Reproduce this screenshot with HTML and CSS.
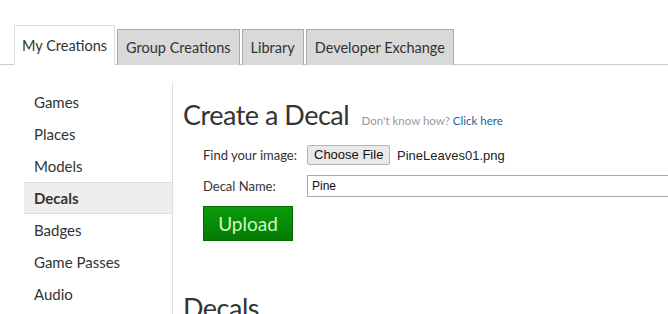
FILE: index.html
```html
<!DOCTYPE html>
<html>
<head lang="en">
  <meta charset="UTF-8">
  <title>Create a Decal</title>
  <link rel="stylesheet" href="styles.css">
</head>
<body>
<div class="tabs">
  <a class="tab current" href="#">My Creations</a>
  <a class="tab" href="#">Group Creations</a>
  <a class="tab" href="#">Library</a>
  <a class="tab" href="#">Developer Exchange</a>
</div>
<div class="page">
  <ul class="side">
    <li><a href="#">Games</a></li>
    <li><a href="#">Places</a></li>
    <li><a href="#">Models</a></li>
    <li class="current"><a href="#">Decals</a></li>
    <li><a href="#">Badges</a></li>
    <li><a href="#">Game Passes</a></li>
    <li><a href="#">Audio</a></li>
  </ul>
  <div class="main">
    <h1>Create a Decal <small>Don't know how? <a href="#">Click here</a></small></h1>
    <div class="form">
      <div class="row">
        <label>Find your image:</label>
        <span class="file"><button type="button">Choose File</button> PineLeaves01.png</span>
      </div>
      <div class="row">
        <label>Decal Name:</label>
        <input class="name" type="text" value="Pine">
      </div>
      <button class="upload" type="button">Upload</button>
    </div>
    <h2>Decals</h2>
  </div>
</div>
</body>
</html>
```

FILE: styles.css
```css
* {
  margin: 0;
  padding: 0
}

ul {
  list-style: none
}

a {
  text-decoration: none;
  color: inherit;
}

body {
  font-family: Lato, "Open Sans", sans-serif;
  color: #333;
  background: #fff;
  overflow: hidden;
}

.tabs {
  display: flex;
  align-items: flex-end;
  gap: 2px;
  padding: 26px 0 0 14px;
  border-bottom: 1px solid #ccc;
  height: 38px;
}

.tab {
  display: block;
  height: 35px;
  line-height: 35px;
  padding: 0 8px;
  font-size: 14.5px;
  background: #d9d9d9;
  border: 1px solid #aaa;
  border-bottom: none;
  margin-bottom: -1px;
}

.tab.current {
  height: 38px;
  line-height: 40px;
  padding: 0 7px;
  background: #fff;
  border-color: #ddd;
  border-bottom: 1px solid #fff;
  margin-bottom: -1px;
}

.page {
  display: flex;
  padding: 18px 0 0 24px;
}

.side {
  width: 148px;
  padding-top: 3px;
  border-right: 1px solid #ddd;
  height: 240px;
}

.side li {
  height: 32px;
  line-height: 32px;
  font-size: 15px;
}

.side li a {
  display: block;
  padding-left: 10px;
}

.side li.current {
  background: #eee;
  border-top: 1px solid #ddd;
  border-bottom: 1px solid #ddd;
  height: 30px;
  line-height: 30px;
  font-weight: bold;
}

.main {
  flex: 1;
  padding: 14px 0 0 10px;
}

h1 {
  font-weight: normal;
  font-size: 27px;
  letter-spacing: -0.5px;
  line-height: 36px;
  color: #333;
}

h1 small {
  font-size: 11.5px;
  letter-spacing: 0;
  color: #999;
  margin-left: 6px;
}

h1 small a {
  color: #1a5fa0;
}

.form {
  padding-left: 20px;
}

.row {
  display: flex;
  align-items: center;
  height: 31px;
  font-size: 13px;
}

.row label {
  width: 104px;
}

.file {
  font-family: "Liberation Sans", Arial, sans-serif;
  font-size: 13px;
  color: #222;
}

.file button {
  font-family: "Liberation Sans", Arial, sans-serif;
  font-size: 13px;
  height: 20px;
  padding: 0 6px;
  margin-right: 3px;
  color: #111;
  background: #e9e9e9;
  border: 1px solid #b5b5b5;
  border-radius: 2px;
}

.name {
  flex: 1;
  height: 20px;
  margin-right: -20px;
  padding: 0 4px;
  font-family: "Liberation Sans", Arial, sans-serif;
  font-size: 12px;
  color: #111;
  border: 1px solid #aaa;
  outline: none;
}

.upload {
  display: block;
  margin-top: 5px;
  width: 90px;
  height: 35px;
  font-family: Lato, "Open Sans", sans-serif;
  font-size: 19px;
  color: #d2f7c0;
  background: linear-gradient(#0b9a0b, #047c04);
  border: 1px solid #066d06;
}

h2 {
  margin-top: 49px;
  font-weight: normal;
  font-size: 27px;
  letter-spacing: -0.5px;
  line-height: 36px;
  color: #333;
}
```
